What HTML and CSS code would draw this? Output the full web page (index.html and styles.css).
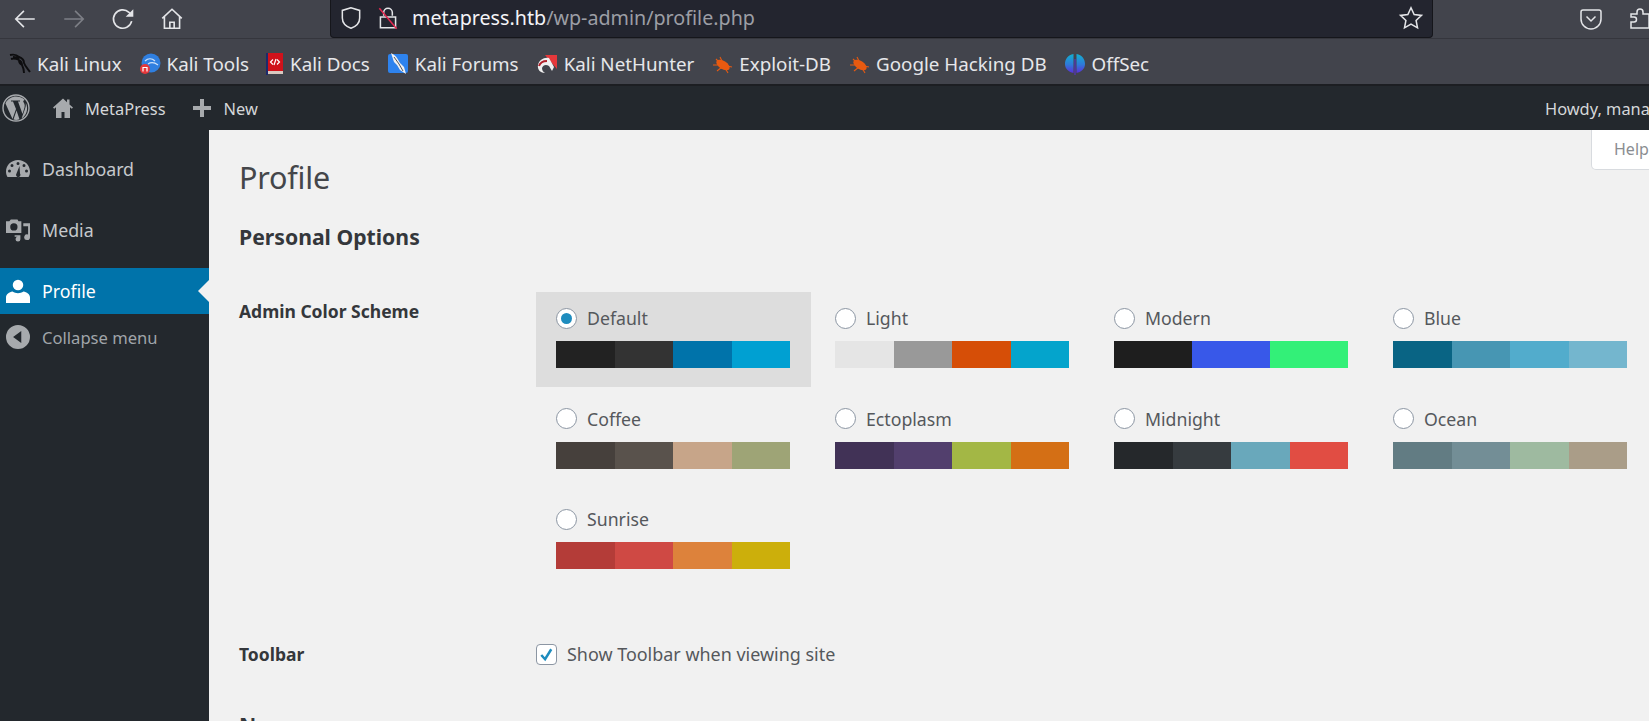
FILE: index.html
```html
<!DOCTYPE html>
<html lang="en">
<head>
    <meta charset="UTF-8">
    <meta name="viewport" content="width=device-width, initial-scale=1.0">
    <title>Profile ‹ MetaPress</title>
    <link rel="stylesheet" href="styles.css">
</head>
<body>

    <!-- browser chrome -->
    <div class="nav-bar">
        <div class="nav-buttons">
            <svg class="nav-icon" viewBox="0 0 24 24"><path d="M21 12H3.500M11 4.500 3.500 12l7.500 7.500"/></svg>
            <svg class="nav-icon dim" viewBox="0 0 24 24"><path d="M3 12h17.500M13 4.500l7.500 7.500-7.500 7.500"/></svg>
            <svg class="nav-icon" viewBox="0 0 24 24"><path d="M20 14a8.500 8.500 0 1 1-2.500-8.200L20 8.500"/><path class="fill" d="M21.500 3v7h-7z"/></svg>
            <svg class="nav-icon" viewBox="0 0 24 24"><path d="M3 11.500 12 3l9 8.500M5 10v10.500h14V10M10 20.500v-5.500h4v5.500"/></svg>
        </div>
        <div class="url-bar">
            <svg class="url-icon" viewBox="0 0 24 24"><path d="M12 2.500 4 5v7c0 5 4 8 8 9.500 4-1.500 8-4.500 8-9.500V5z"/></svg>
            <svg class="url-icon lock" viewBox="0 0 24 24"><path d="M8 10V7a4 4 0 0 1 8 0v3M5 11h14v10H5z"/><path class="slash" d="M4 3l16 19"/></svg>
            <span class="url-text"><span class="url-host">metapress.htb</span>/wp-admin/profile.php</span>
            <svg class="url-icon star" viewBox="0 0 24 24"><path d="M12 2.500l2.900 6.300 6.800.8-5 4.700 1.300 6.800-6-3.400-6 3.400 1.300-6.800-5-4.700 6.800-.8z"/></svg>
        </div>
        <div class="nav-right">
            <svg class="nav-icon" viewBox="0 0 24 24"><path d="M4 3h16a2 2 0 0 1 2 2v7a10 10 0 0 1-20 0V5a2 2 0 0 1 2-2z"/><path d="M7.500 9.500 12 14l4.500-4.500"/></svg>
            <svg class="nav-icon" viewBox="0 0 24 24"><path d="M3 21v-6h3a2.500 2.500 0 0 0 0-5H3V7h6V5a3 3 0 0 1 6 0v2h6v14z"/></svg>
        </div>
    </div>

    <div class="bookmarks">
        <a class="bookmark">
            <svg class="favicon" viewBox="0 0 22 22"><path class="kali" d="M1 2c4-1 7 0 9 2 3 1 5 3 5 6 1 3 3 5 6 9M2 6c3-1 6 0 8 1 2 1 3 3 3 5M10 7c0 2 1 4 3 5 1 2 2 5 2 8M4 4c2 0 4 0 6 2"/></svg>
            Kali Linux
        </a>
        <a class="bookmark">
            <svg class="favicon" viewBox="0 0 22 22"><circle cx="12" cy="10" r="9.500" fill="#2f7fe0"/><path d="M6 8c3-3 7-3 10 0M9 11c3-2 6-2 10 1" stroke="#cfe3fb" fill="none" stroke-width="1.200"/><circle cx="6" cy="16" r="5" fill="#e5383b"/><path d="M4 18.500v-4h4v4" stroke="#fff" fill="none" stroke-width="1.200"/></svg>
            Kali Tools
        </a>
        <a class="bookmark book">
            <svg class="favicon" viewBox="0 0 18 22"><rect x="1" y="0" width="16" height="18" fill="#d0121b"/><rect x="0" y="0" width="2" height="22" fill="#1d2a6b"/><rect x="2" y="18" width="15" height="3" fill="#d8c9c0"/><path d="M7 6.500 4.500 9 7 11.500M11 6.500 13.500 9 11 11.500M10 6 8 12" stroke="#fff" fill="none" stroke-width="1.200"/></svg>
            Kali Docs
        </a>
        <a class="bookmark">
            <svg class="favicon" viewBox="0 0 22 22"><rect x="1" y="1" width="20" height="19" rx="2" fill="#2e83ee"/><path d="M4 0c3 2 5 3 6 5l3 5 4 4 2 7-6-4-3-5-3-3-2-6z" fill="#f1f1f1"/><path d="M7 4l5 7 4 7" stroke="#52555c" fill="none"/></svg>
            Kali Forums
        </a>
        <a class="bookmark">
            <svg class="favicon" viewBox="0 0 22 22"><path d="M9 2h12v14z" fill="#e5383b"/><path d="M2 12C3 7 8 4 13 5l5 9-2 4-3-5c-3-2-6-1-7 2 0 2 1 4 3 5-4 0-8-3-7-8z" fill="#f0f0f0"/><path d="M3 13c1-3 4-5 8-5" stroke="#b0202a" fill="none" stroke-width="2"/></svg>
            Kali NetHunter
        </a>
        <a class="bookmark">
            <svg class="favicon" viewBox="0 0 22 22"><ellipse class="bug" cx="12" cy="12" rx="7.500" ry="4" transform="rotate(32 12 12)"/><path class="bug-legs" d="M2 12h7M5 6l4 4M6 18l5-4M17 20l-3-5M21 14l-5-1M9 4l2 4"/></svg>
            Exploit-DB
        </a>
        <a class="bookmark">
            <svg class="favicon" viewBox="0 0 22 22"><ellipse class="bug" cx="12" cy="12" rx="7.500" ry="4" transform="rotate(32 12 12)"/><path class="bug-legs" d="M2 12h7M5 6l4 4M6 18l5-4M17 20l-3-5M21 14l-5-1M9 4l2 4"/></svg>
            Google Hacking DB
        </a>
        <a class="bookmark">
            <svg class="favicon" viewBox="0 0 22 22"><defs><linearGradient id="offsec" x1="0" y1="0" x2="0" y2="1"><stop offset="0" stop-color="#12b0d0"/><stop offset=".55" stop-color="#2f7ad8"/><stop offset="1" stop-color="#5a2fd8"/></linearGradient></defs><path d="M9.500 1C4 2 1 6 1 11s4 8 8.500 9zM12.500 1C18 2 21 6 21 11s-4 8-8.500 9z" fill="url(#offsec)"/><path d="M11 6v16" stroke="#5a2fd8"/></svg>
            OffSec
        </a>
    </div>

    <!-- wp admin bar -->
    <div class="admin-bar">
        <svg class="wp-logo" viewBox="0 0 28 28">
            <circle cx="14" cy="14" r="13" fill="none" stroke="#a7aaad" stroke-width="1.400"/>
            <path d="M3.500 9.500 10.500 25 14 15l-3-7.500h-2V6.500h9v1h-2l4.500 12.500 2-6.500c.8-3-.5-4.500-1.300-6 .2-1 1-1.500 1.800-1.500C20 3 17 2.500 14 2.500 9.500 2.500 6 5 4 8zM14.500 16.500 11.500 25.500c2 .6 4 .5 6-.2zM23.800 9c.3 2.500-.3 4.500-1 6.500l-3.200 9c5-3 7-10 4.200-15.500z" fill="#a7aaad"/>
        </svg>
        <a class="bar-item">
            <svg class="bar-icon" viewBox="0 0 20 20"><path d="M10 .500 0 9.500l1.200 1.300L3 9.300V20h5.500v-6h3v6H17V9.300l1.800 1.500L20 9.500 16.500 6.400V1.500h-2.500v2.700z"/></svg>
            MetaPress
        </a>
        <a class="bar-item">
            <svg class="bar-icon" viewBox="0 0 20 20"><path d="M8 1h4v7h7v4h-7v7H8v-7H1V8h7z"/></svg>
            New
        </a>
        <span class="howdy">Howdy, manager</span>
    </div>

    <div class="wp-body">
        <aside class="sidebar">
            <ul class="menu">
                <li class="menu-item">
                    <svg class="menu-icon" viewBox="0 0 24 20"><path fill-rule="evenodd" d="M12 1C5.500 1 0 6 0 12.500c0 2 .5 4 1.500 5.500h21c1-1.500 1.500-3.500 1.500-5.500C24 6 18.500 1 12 1zM6 5a1.500 1.500 0 1 1 0 3 1.500 1.500 0 0 1 0-3zm6-2a1.500 1.500 0 1 1 0 3 1.500 1.500 0 0 1 0-3zm6 2a1.500 1.500 0 1 1 0 3 1.500 1.500 0 0 1 0-3zM3.500 10.500a1.500 1.500 0 1 1 0 3 1.500 1.500 0 0 1 0-3zm17 0a1.500 1.500 0 1 1 0 3 1.500 1.500 0 0 1 0-3zM13.500 7l.5 7.500a2.200 2.200 0 1 1-3.500 0z"/></svg>
                    Dashboard
                </li>
                <li class="menu-item">
                    <svg class="menu-icon" viewBox="0 0 25 24"><path fill-rule="evenodd" d="M5 1h7l1 2h3v12H0V3h3.500zM8.200 5a3.800 3.800 0 1 0 0 7.600 3.800 3.800 0 0 0 0-7.600zM18 5h7v14.500a3 3 0 1 1-2-2.800V8h-5zM9 17.500h6v4a2.500 2.500 0 1 1-2-2.400v-.100H9z"/></svg>
                    Media
                </li>
                <li class="menu-item current">
                    <svg class="menu-icon" viewBox="0 0 22 22"><circle cx="11" cy="5.500" r="4.800"/><path d="M0 22v-5c0-3 3-5 6-5.500 3 2 7 2 10 0 3 .5 6 2.500 6 5.500v5z"/></svg>
                    Profile
                </li>
            </ul>
            <div class="menu-item collapse">
                <svg class="menu-icon" viewBox="0 0 22 22"><path fill-rule="evenodd" d="M11 0a11 11 0 1 1 0 22 11 11 0 0 1 0-22zM14 5.500 6.500 11l7.500 5.500z"/></svg>
                Collapse menu
            </div>
        </aside>

        <main class="content">
            <div class="help-tab">Help</div>

            <h1>Profile</h1>
            <h2 class="section-title">Personal Options</h2>

            <div class="form-row">
                <div class="row-label">Admin Color Scheme</div>
                <div class="scheme-grid">
                    <label class="scheme selected default">
                        <span class="scheme-name"><span class="radio checked"></span>Default</span>
                        <span class="swatch"><i></i><i></i><i></i><i></i></span>
                    </label>
                    <label class="scheme light">
                        <span class="scheme-name"><span class="radio"></span>Light</span>
                        <span class="swatch"><i></i><i></i><i></i><i></i></span>
                    </label>
                    <label class="scheme modern">
                        <span class="scheme-name"><span class="radio"></span>Modern</span>
                        <span class="swatch"><i></i><i></i><i></i></span>
                    </label>
                    <label class="scheme blue">
                        <span class="scheme-name"><span class="radio"></span>Blue</span>
                        <span class="swatch"><i></i><i></i><i></i><i></i></span>
                    </label>
                    <label class="scheme coffee">
                        <span class="scheme-name"><span class="radio"></span>Coffee</span>
                        <span class="swatch"><i></i><i></i><i></i><i></i></span>
                    </label>
                    <label class="scheme ectoplasm">
                        <span class="scheme-name"><span class="radio"></span>Ectoplasm</span>
                        <span class="swatch"><i></i><i></i><i></i><i></i></span>
                    </label>
                    <label class="scheme midnight">
                        <span class="scheme-name"><span class="radio"></span>Midnight</span>
                        <span class="swatch"><i></i><i></i><i></i><i></i></span>
                    </label>
                    <label class="scheme ocean">
                        <span class="scheme-name"><span class="radio"></span>Ocean</span>
                        <span class="swatch"><i></i><i></i><i></i><i></i></span>
                    </label>
                    <label class="scheme sunrise">
                        <span class="scheme-name"><span class="radio"></span>Sunrise</span>
                        <span class="swatch"><i></i><i></i><i></i><i></i></span>
                    </label>
                </div>
            </div>

            <div class="form-row toolbar-row">
                <div class="row-label">Toolbar</div>
                <label class="check-label">
                    <span class="checkbox"><svg viewBox="0 0 20 20"><path d="M4.500 10.500 8.500 15 15 4.500"/></svg></span>
                    Show Toolbar when viewing site
                </label>
            </div>

            <h2 class="section-title name-title">Name</h2>
        </main>
    </div>

</body>
</html>
```

FILE: styles.css
```css
* {
    box-sizing: border-box;
}

html, body {
    height: 100%;
}

body {
    margin: 0;
    display: flex;
    flex-direction: column;
    overflow: hidden;
    font-family: "Noto Sans", sans-serif;
    background: #f1f1f1;
    color: #44464a;
}

/* browser chrome */
.nav-bar {
    display: flex;
    flex: none;
    height: 38px;
    background: #42444c;
}

.nav-buttons {
    display: flex;
    flex: none;
    gap: 23px;
    align-items: center;
    width: 330px;
    height: 37px;
    padding-left: 12px;
}

.nav-icon {
    flex: none;
    width: 26px;
    height: 26px;
    fill: none;
    stroke: #e4e5e8;
    stroke-width: 1.500;
}

.nav-icon.dim {
    stroke: #7d7f86;
}

.nav-icon .fill {
    fill: #e4e5e8;
    stroke: none;
}

.url-bar {
    display: flex;
    flex: none;
    align-items: center;
    width: 1103px;
    height: 38px;
    padding: 0 8px 2px 7px;
    background: #23252f;
    border: 1px solid #15161b;
    border-top: 0;
    border-radius: 0 0 4px 4px;
}

.url-icon {
    flex: none;
    width: 26px;
    height: 26px;
    fill: none;
    stroke: #e4e5e8;
    stroke-width: 1.400;
}

.url-icon.lock {
    margin-left: 11px;
}

.url-icon .slash {
    stroke: #e22850;
}

.url-icon.star {
    margin-left: auto;
}

.url-text {
    margin-left: 11px;
    font-size: 19.700px;
    color: #9c9ea5;
}

.url-host {
    color: #f4f4f7;
}

.nav-right {
    display: flex;
    flex: none;
    gap: 25px;
    align-items: center;
    height: 37px;
    padding-left: 146px;
}

.nav-right .nav-icon {
    width: 24px;
    height: 24px;
}

.bookmarks {
    display: flex;
    flex: none;
    align-items: center;
    gap: 17px;
    height: 48px;
    padding: 5px 0 0 9px;
    background: #42444c;
    border-top: 1px solid #35363d;
    border-bottom: 2px solid #1c1e22;
    font-size: 18.800px;
    color: #e6e7ea;
}

.bookmark {
    display: flex;
    align-items: center;
    gap: 6px;
    white-space: nowrap;
}

.favicon {
    flex: none;
    width: 22px;
    height: 22px;
}

.bookmark.book .favicon {
    width: 18px;
}

.kali {
    fill: none;
    stroke: #0d0d0f;
    stroke-width: 1.900;
}

.bug {
    fill: #e85a10;
}

.bug-legs {
    fill: none;
    stroke: #e85a10;
    stroke-width: 1.100;
}

/* wp admin bar */
.admin-bar {
    display: flex;
    flex: none;
    align-items: center;
    height: 44px;
    padding-left: 2px;
    background: #23282d;
    font-size: 16.400px;
    color: #d5d7d9;
}

.wp-logo {
    flex: none;
    width: 28px;
    height: 28px;
    margin-right: 23px;
}

.bar-item {
    display: flex;
    align-items: center;
    gap: 12px;
    margin-right: 26px;
}

.bar-icon {
    flex: none;
    width: 20px;
    height: 20px;
    fill: #a7aaad;
}

.howdy {
    margin-left: auto;
    width: 104px;
    white-space: nowrap;
    overflow: hidden;
}

.wp-body {
    display: flex;
    flex: 1;
    min-height: 0;
}

/* sidebar */
.sidebar {
    flex: none;
    width: 209px;
    padding-top: 16px;
    background: #23282d;
    font-size: 17.800px;
    color: #c6c9cc;
}

.menu {
    display: flex;
    flex-direction: column;
    gap: 15px;
    margin: 0;
    padding: 0;
    list-style: none;
}

.menu-item {
    position: relative;
    display: flex;
    align-items: center;
    height: 46px;
    white-space: nowrap;
}

.menu-icon {
    flex: none;
    width: 24px;
    height: 24px;
    margin: 0 12px 0 6px;
    fill: #a7aaad;
}

.menu-item.current {
    background: #0073aa;
    color: #fff;
}

.menu-item.current .menu-icon {
    fill: #fff;
}

.menu-item.current::after {
    content: "";
    position: absolute;
    top: 12px;
    right: 0;
    border: 11px solid transparent;
    border-left: 0;
    border-right-color: #f1f1f1;
}

.collapse {
    font-size: 16.600px;
    color: #a0a5aa;
}

/* content */
.content {
    position: relative;
    flex: 1;
    min-width: 0;
    padding: 28px 0 0 30px;
    overflow: hidden;
}

.help-tab {
    position: absolute;
    top: 0;
    right: -30px;
    width: 88px;
    height: 40px;
    padding: 8px 0 0 22px;
    background: #fff;
    border: 1px solid #d8dbdf;
    border-top: 0;
    border-radius: 0 0 5px 5px;
    font-size: 16px;
    color: #8a8d91;
}

h1 {
    margin: 0;
    font-size: 30.500px;
    font-weight: 400;
    line-height: 38px;
    color: #44464a;
    letter-spacing: -.2px;
}

.section-title {
    margin: 27px 0 41px;
    font-size: 21.200px;
    font-weight: 700;
    line-height: 28px;
    color: #34373b;
}

.form-row {
    display: grid;
    grid-template-columns: 297px 1fr;
}

.row-label {
    padding-top: 7px;
    font-size: 17.500px;
    font-weight: 700;
    line-height: 24px;
    color: #34373b;
}

.scheme-grid {
    display: grid;
    grid-template-columns: repeat(4, 279px);
    grid-auto-rows: 95px;
    row-gap: 5.500px;
}

.scheme {
    display: flex;
    flex-direction: column;
    gap: 12px;
    padding: 15px 20px 0 20px;
    width: 275px;
}

.scheme.selected {
    background: #dddddd;
}

.scheme-name {
    display: flex;
    align-items: center;
    gap: 10px;
    height: 22px;
    font-size: 17.700px;
    color: #55585c;
}

.radio {
    flex: none;
    position: relative;
    width: 21px;
    height: 21px;
    background: #fff;
    border: 1px solid #8c96a3;
    border-radius: 50%;
}

.radio.checked::before {
    content: "";
    position: absolute;
    top: 4px;
    left: 4px;
    width: 11px;
    height: 11px;
    border-radius: 50%;
    background: #1e8cbe;
}

.swatch {
    display: flex;
    height: 27px;
    width: 234px;
}

.swatch i {
    flex: 1;
}

.default i:nth-child(1) { background: #222222; }
.default i:nth-child(2) { background: #333333; }
.default i:nth-child(3) { background: #0073aa; }
.default i:nth-child(4) { background: #00a0d2; }

.light i:nth-child(1) { background: #e5e5e5; }
.light i:nth-child(2) { background: #999999; }
.light i:nth-child(3) { background: #d64e07; }
.light i:nth-child(4) { background: #04a4cc; }

.modern i:nth-child(1) { background: #1e1e1e; }
.modern i:nth-child(2) { background: #3858e9; }
.modern i:nth-child(3) { background: #33f078; }

.blue i:nth-child(1) { background: #096484; }
.blue i:nth-child(2) { background: #4796b3; }
.blue i:nth-child(3) { background: #52accc; }
.blue i:nth-child(4) { background: #74b6ce; }

.coffee i:nth-child(1) { background: #46403c; }
.coffee i:nth-child(2) { background: #59524c; }
.coffee i:nth-child(3) { background: #c7a589; }
.coffee i:nth-child(4) { background: #9ea476; }

.ectoplasm i:nth-child(1) { background: #413256; }
.ectoplasm i:nth-child(2) { background: #523f6d; }
.ectoplasm i:nth-child(3) { background: #a3b745; }
.ectoplasm i:nth-child(4) { background: #d46f15; }

.midnight i:nth-child(1) { background: #25282b; }
.midnight i:nth-child(2) { background: #363b3f; }
.midnight i:nth-child(3) { background: #69a8bb; }
.midnight i:nth-child(4) { background: #e14d43; }

.ocean i:nth-child(1) { background: #627c83; }
.ocean i:nth-child(2) { background: #738e96; }
.ocean i:nth-child(3) { background: #9ebaa0; }
.ocean i:nth-child(4) { background: #aa9d88; }

.sunrise i:nth-child(1) { background: #b43c38; }
.sunrise i:nth-child(2) { background: #cf4944; }
.sunrise i:nth-child(3) { background: #dd823b; }
.sunrise i:nth-child(4) { background: #ccaf0b; }

.toolbar-row {
    margin-top: 54px;
}

.toolbar-row .row-label {
    padding-top: 0;
}

.check-label {
    display: flex;
    align-items: center;
    gap: 10px;
    font-size: 17.950px;
    line-height: 24px;
    color: #55585c;
}

.checkbox {
    flex: none;
    width: 21px;
    height: 21px;
    background: #fff;
    border: 1px solid #8c96a3;
    border-radius: 4px;
}

.checkbox svg {
    display: block;
    width: 19px;
    height: 19px;
    fill: none;
    stroke: #1e8cbe;
    stroke-width: 2.600;
}

.name-title {
    margin: 45px 0 0;
}
```
